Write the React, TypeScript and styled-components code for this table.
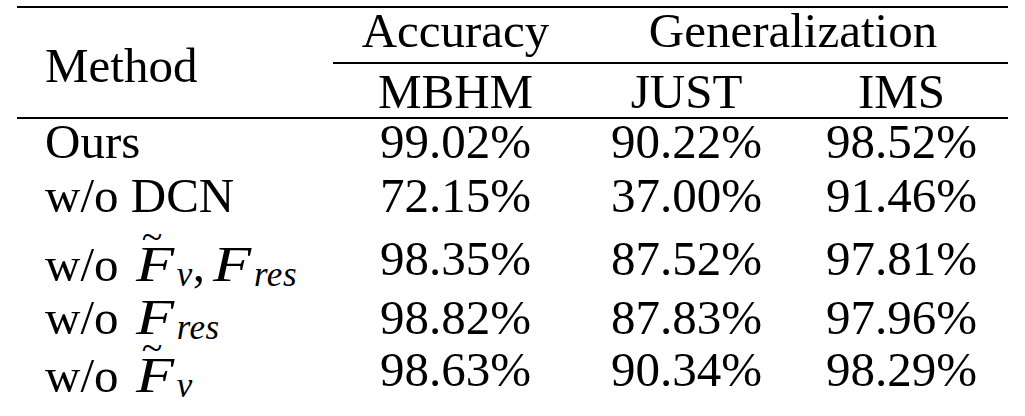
import React from "react";
import styled, { createGlobalStyle } from "styled-components";

const GlobalStyle = createGlobalStyle`
  html, body {
    margin: 0;
    padding: 0;
    background: #ffffff;
  }
  body {
    font-family: "Liberation Serif", "Times New Roman", serif;
    color: #000000;
  }
`;

const Page = styled.div`
  padding: 6px 0 0 17px;
  width: 1008px;
`;

const Table = styled.div`
  width: 991px;
  border-top: 2px solid #000;
  border-bottom: 2px solid #000;
  font-size: 49px;
`;

const COLUMNS = "316px 245px 217px 213px";

const Header = styled.div`
  display: grid;
  grid-template-columns: ${COLUMNS};
  grid-template-rows: auto auto;
  border-bottom: 2px solid #000;
`;

const MethodCell = styled.div`
  grid-row: 1 / span 2;
  grid-column: 1;
  padding: 35px 0 0 28px;
  line-height: 45px;
  white-space: nowrap;
`;

const GroupCell = styled.div<{ $span: number }>`
  grid-row: 1;
  grid-column: span ${({ $span }) => $span};
  line-height: 45px;
  padding-bottom: 9px;
  text-align: center;
  border-bottom: 2px solid #000;
  white-space: nowrap;
`;

const SubHeadCell = styled.div`
  grid-row: 2;
  line-height: 51px;
  padding-top: 2px;
  text-align: center;
  white-space: nowrap;
`;

const Body = styled.div`
  display: grid;
  grid-template-columns: ${COLUMNS};
  padding-bottom: 22px;
`;

const NameCell = styled.div<{ $gap: number }>`
  padding: ${({ $gap }) => $gap}px 0 0 28px;
  line-height: 45px;
  white-space: nowrap;
`;

const ValueCell = styled.div<{ $gap: number }>`
  padding-top: ${({ $gap }) => $gap}px;
  line-height: 45px;
  text-align: center;
  white-space: nowrap;
`;

// math italic letters, set a little wider like Computer Modern
const MathF = styled.span`
  display: inline-block;
  width: 41px;
  margin-left: 5px;
  font-family: "Liberation Serif", "DejaVu Serif", serif;
  font-style: italic;
  font-weight: 400;
  font-size: 50px;
  line-height: 40px;
  transform: scaleX(1.25);
  transform-origin: 0 0;
`;

const Sub = styled.span`
  font-family: "Liberation Serif", "DejaVu Serif", serif;
  font-style: italic;
  font-size: 35px;
  letter-spacing: 0.5px;
  line-height: 0;
  vertical-align: -5px;
`;

const Tilde = styled.span`
  display: inline-block;
  width: 0;
  font-size: 38px;
  line-height: 0;
  vertical-align: 32px;
  text-indent: 11px;
  white-space: nowrap;
`;

const Comma = styled.span`
  margin-right: 3px;
`;

const Ftilde = () => (
  <>
    <Tilde>~</Tilde>
    <MathF>F</MathF>
  </>
);

type Row = { name: React.ReactNode; values: string[]; gap: number };

const rows: Row[] = [
  { name: "Ours", values: ["99.02%", "90.22%", "98.52%"], gap: 0 },
  { name: "w/o DCN", values: ["72.15%", "37.00%", "91.46%"], gap: 9 },
  {
    name: (
      <>
        w/o <Ftilde />
        <Sub>v</Sub>
        <Comma>,</Comma>
        <MathF>F</MathF>
        <Sub>res</Sub>
      </>
    ),
    values: ["98.35%", "87.52%", "97.81%"],
    gap: 18,
  },
  {
    name: (
      <>
        w/o <MathF>F</MathF>
        <Sub>res</Sub>
      </>
    ),
    values: ["98.82%", "87.83%", "97.96%"],
    gap: 8,
  },
  {
    name: (
      <>
        w/o <Ftilde />
        <Sub>v</Sub>
      </>
    ),
    values: ["98.63%", "90.34%", "98.29%"],
    gap: 7,
  },
];

export default function App() {
  return (
    <>
      <GlobalStyle />
      <Page>
        <Table>
          <Header>
            <MethodCell>Method</MethodCell>
            <GroupCell $span={1}>Accuracy</GroupCell>
            <GroupCell $span={2}>Generalization</GroupCell>
            <SubHeadCell>MBHM</SubHeadCell>
            <SubHeadCell>JUST</SubHeadCell>
            <SubHeadCell>IMS</SubHeadCell>
          </Header>
          <Body>
            {rows.map((row, i) => (
              <React.Fragment key={i}>
                <NameCell $gap={row.gap}>{row.name}</NameCell>
                {row.values.map((v, j) => (
                  <ValueCell key={j} $gap={row.gap}>
                    {v}
                  </ValueCell>
                ))}
              </React.Fragment>
            ))}
          </Body>
        </Table>
      </Page>
    </>
  );
}
